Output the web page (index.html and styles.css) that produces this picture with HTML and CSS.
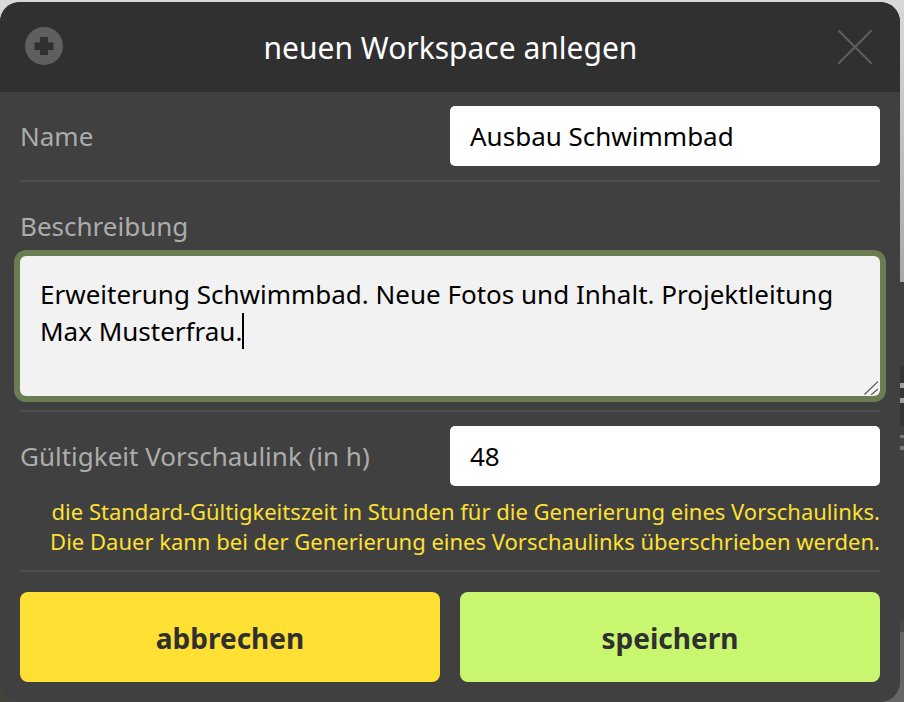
FILE: index.html
```html
<!DOCTYPE html>
<html lang="de">
  <head>
    <title>neuen Workspace anlegen</title>
    <link rel="stylesheet" href="styles.css">
  </head>
  <body>
    <div class="dialog">
      <div class="dialog-head">
        <svg class="head-icon" width="38" height="38" viewBox="0 0 38 38">
          <circle cx="19" cy="19" r="19" fill="#5f5f5f" />
          <path d="M15 10h8v5.500h5.500v7.500H23V28h-8v-5H9.500v-7.500H15z" fill="#303030" />
        </svg>
        <h1 class="dialog-title">neuen Workspace anlegen</h1>
        <svg class="close-icon" width="34" height="34" viewBox="0 0 34 34">
          <path d="M1 1l32 32M33 1L1 33" stroke="#5f5f5f" stroke-width="2" stroke-linecap="round" />
        </svg>
      </div>

      <div class="dialog-body">
        <div class="row row-name">
          <label class="label">Name</label>
          <div class="field">Ausbau Schwimmbad</div>
        </div>

        <div class="block-desc">
          <label class="label">Beschreibung</label>
          <div class="textarea">
            <p>Erweiterung Schwimmbad. Neue Fotos und Inhalt. Projektleitung</p>
            <p>Max Musterfrau.<span class="caret"></span></p>
            <svg class="grip" width="14" height="14" viewBox="0 0 14 14">
              <path d="M0.500 13.500L14 0.500M7 14l7-6" stroke="#555" stroke-width="1.200" />
            </svg>
          </div>
        </div>

        <div class="block-valid">
          <div class="row">
            <label class="label">Gültigkeit Vorschaulink (in h)</label>
            <div class="field">48</div>
          </div>
          <p class="hint">die Standard-Gültigkeitszeit in Stunden für die Generierung eines Vorschaulinks.<br>Die Dauer kann bei der Generierung eines Vorschaulinks überschrieben werden.</p>
        </div>

        <div class="buttons">
          <button class="btn btn-cancel">abbrechen</button>
          <button class="btn btn-save">speichern</button>
        </div>
      </div>
    </div>
    <div class="page-edge"></div>
  </body>
</html>
```

FILE: styles.css
```css
/* the page behind the dialog only shows in the corners and on the right edge */
body {
  margin: 0;
  height: 702px;
  overflow: hidden;
  display: flex;
  background:
    linear-gradient(#d8d8d8 0 30px, transparent 30px),
    linear-gradient(to right, #43453a 50%, #666 50%);
  font-family: "Noto Sans", sans-serif;
}
.page-edge {
  width: 4px;
  background: linear-gradient(
    to bottom,
    #d8d8d8 0,
    #d4d4d4 30px,
    #a8a8a8 282px,
    #404040 282px 366px,
    #333 366px 383px,
    #a0a0a0 383px 388px,
    #333 388px 398px,
    #a0a0a0 398px 403px,
    #333 403px 426px,
    #404040 426px 435px,
    #777 435px 438px,
    #404040 438px 446px,
    #777 446px 450px,
    #404040 450px 620px,
    #484848 620px 632px,
    #666 632px
  );
}

/* dialog frame */
.dialog {
  width: 900px;
  height: 700px;
  margin-top: 2px;
  border-radius: 20px;
  overflow: hidden;
  background-color: #404040;
}
.dialog-head {
  height: 90px;
  padding: 0 28px 0 25px;
  display: flex;
  align-items: center;
  justify-content: space-between;
  background-color: #303030;
}
.head-icon {
  margin-bottom: 2px;
}
.dialog-title {
  margin: 0;
  font-size: 30px;
  font-weight: 400;
  color: white;
}

/* form rows */
.dialog-body {
  padding: 14px 20px 0;
}
.row {
  display: flex;
  justify-content: space-between;
  align-items: center;
}
.row-name {
  padding-bottom: 14px;
  border-bottom: 2px solid #4d4d4d;
}
.label {
  font-size: 26px;
  color: #acacac;
}
.field {
  box-sizing: border-box;
  width: 430px;
  height: 60px;
  padding-left: 20px;
  line-height: 60px;
  font-size: 26px;
  color: black;
  background-color: white;
  border-radius: 5px;
}

/* description */
.block-desc {
  padding: 26px 0 14px;
  border-bottom: 2px solid #4d4d4d;
}
.block-desc .label {
  display: block;
  margin-bottom: 12px;
  line-height: 36px;
}
.textarea {
  position: relative;
  box-sizing: border-box;
  height: 140px;
  padding: 20px 20px 0;
  border-radius: 6px;
  box-shadow: 0 0 0 6px #6b7c53;
  background-color: #f2f2f2;
  font-size: 26px;
  line-height: 37px;
  color: black;
}
.textarea p {
  margin: 0;
  white-space: nowrap;
}
.caret {
  display: inline-block;
  width: 2px;
  height: 36px;
  vertical-align: -8px;
  background-color: black;
}
.grip {
  position: absolute;
  right: 2px;
  bottom: 1px;
}

/* validity */
.block-valid {
  padding: 14px 0 14px;
  border-bottom: 2px solid #4d4d4d;
}
.hint {
  margin: 10px 0 0;
  text-align: right;
  font-size: 22px;
  line-height: 30px;
  color: #ffe033;
}

/* buttons */
.buttons {
  display: flex;
  gap: 20px;
  margin-top: 20px;
}
.btn {
  flex: 1;
  height: 90px;
  padding: 2px 0 0;
  border: none;
  border-radius: 8px;
  font-family: inherit;
  font-size: 28px;
  font-weight: bold;
  color: #303030;
}
.btn-cancel {
  background-color: #ffe033;
}
.btn-save {
  background-color: #c8f76f;
}
```
